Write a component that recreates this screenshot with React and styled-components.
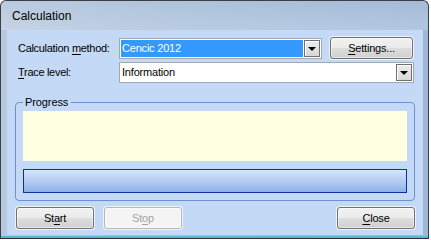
import React from 'react'
import styled, { createGlobalStyle } from 'styled-components'

const Global = createGlobalStyle`
  body {
    margin: 0;
    background: #ffffff;
    font-family: 'Liberation Sans', Arial, sans-serif;
  }
`

export default function App() {
  return (
    <>
      <Global />
      <Window>
        <TitleBar>Calculation</TitleBar>
        <Client>
          <Row>
            <Label>Calculation <u>m</u>ethod:</Label>
            <Combo width={203}>
              <Value selected>Cencic 2012</Value>
              <DropButton><Arrow /></DropButton>
            </Combo>
            <Button width={83} style={{ marginLeft: 8 }}>
              <u>S</u>ettings...
            </Button>
          </Row>
          <Row>
            <Label><u>T</u>race level:</Label>
            <Combo width={295}>
              <Value>Information</Value>
              <DropButton><Arrow /></DropButton>
            </Combo>
          </Row>
          <Group>
            <Legend>Progress</Legend>
            <Log />
            <ProgressBar />
          </Group>
          <Footer>
            <Button width={78}>St<u>a</u>rt</Button>
            <Button width={78} disabled>St<u>o</u>p</Button>
            <Spacer />
            <Button width={78}><u>C</u>lose</Button>
          </Footer>
        </Client>
      </Window>
    </>
  )
}

const Window = styled.div`
  width: 429px;
  height: 239px;
  box-sizing: border-box;
  border: 1px solid #3a3f46;
  border-bottom-color: #2a2f36;
  border-radius: 6px 6px 0 0;
  background: linear-gradient(90deg, #b7c8dd 0%, #a9c0da 40%, #9fb8d6 100%);
  display: flex;
  flex-direction: column;
  overflow: hidden;
  box-shadow: inset 0 -2px 0 #5ab8d4;
`

const TitleBar = styled.div`
  height: 29px;
  padding-left: 11px;
  display: flex;
  align-items: center;
  font-size: 12px;
  color: #000;
  background: linear-gradient(180deg, rgba(255,255,255,0.05), rgba(255,255,255,0.2));
`

const Client = styled.div`
  flex: 1;
  margin: 0 5px 3px 6px;
  background: #c4d9f5;
  padding: 7px 7px 0 8px;
  display: flex;
  flex-direction: column;
`

const Row = styled.div`
  display: flex;
  align-items: center;
  height: 22px;
  margin-bottom: 2px;
`

const Label = styled.div`
  width: 101px;
  padding-left: 3px;
  font-size: 11px;
  letter-spacing: -0.3px;
  color: #000;
  u { text-decoration-thickness: 1px; text-underline-offset: 2px; }
`

const Combo = styled.div`
  width: ${p => p.width}px;
  height: 21px;
  box-sizing: border-box;
  border: 1px solid #a2a8b0;
  background: #fff;
  padding: 1px;
  display: flex;
`

const Value = styled.div`
  flex: 1;
  background: ${p => (p.selected ? '#3399ff' : '#fff')};
  color: ${p => (p.selected ? '#fff' : '#000')};
  font-size: 11px;
  letter-spacing: -0.2px;
  line-height: 17px;
  padding-left: 1px;
  margin-right: 1px;
`

const DropButton = styled.div`
  width: 16px;
  box-sizing: border-box;
  border: 1px solid #707070;
  background: linear-gradient(#ececec, #d8d8d8);
  box-shadow: inset 1px 1px 0 #fff;
  display: flex;
  align-items: center;
  justify-content: center;
`

const Arrow = styled.span`
  width: 0;
  height: 0;
  border-left: 4px solid transparent;
  border-right: 4px solid transparent;
  border-top: 4px solid #000;
  margin-top: 1px;
`

const Button = styled.div`
  width: ${p => p.width}px;
  height: 22px;
  box-sizing: border-box;
  border: 1px solid ${p => (p.disabled ? '#b3b7ba' : '#707070')};
  border-radius: 3px;
  background: ${p =>
    p.disabled
      ? '#f4f4f4'
      : 'linear-gradient(180deg, #f2f2f2 0%, #ebebeb 48%, #dddddd 52%, #cfcfcf 100%)'};
  box-shadow: 0 0 0 1px rgba(255, 255, 255, 0.7), inset 0 0 0 1px rgba(255, 255, 255, 0.5);
  color: ${p => (p.disabled ? '#a3a3a3' : '#000')};
  font-size: 11px;
  letter-spacing: -0.2px;
  display: flex;
  align-items: center;
  justify-content: center;
  u { text-underline-offset: 2px; }
`

const Group = styled.div`
  position: relative;
  margin-top: 17px;
  width: 400px;
  height: 99px;
  box-sizing: border-box;
  border: 1px solid #6f8fd4;
  border-radius: 4px;
  padding: 8px 7px 0 7px;
  display: flex;
  flex-direction: column;
  gap: 8px;
`

const Legend = styled.span`
  position: absolute;
  top: -8px;
  left: 7px;
  padding: 0 3px 0 2px;
  background: #c4d9f5;
  font-size: 11px;
  letter-spacing: -0.1px;
  line-height: 14px;
  color: #000;
`

const Log = styled.div`
  height: 50px;
  background: #ffffe1;
`

const ProgressBar = styled.div`
  height: 24px;
  box-sizing: border-box;
  border: 1px solid #0b3296;
  background: linear-gradient(180deg, #d5e5fc 0%, #b4cef4 50%, #8fb1e8 100%);
`

const Footer = styled.div`
  display: flex;
  gap: 10px;
  margin-top: 6px;
  padding-left: 1px;
  padding-right: 1px;
`

const Spacer = styled.div`
  flex: 1;
`
